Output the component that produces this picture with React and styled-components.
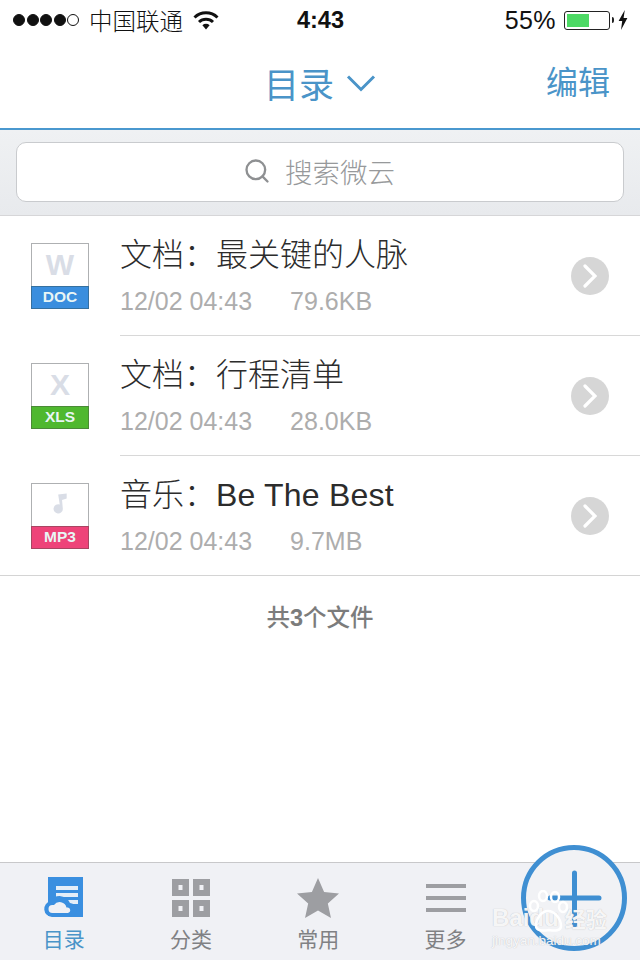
import React from 'react';
import styled, { createGlobalStyle } from 'styled-components';
import { Search } from 'lucide-react';

const sans = '"Liberation Sans", "Noto Sans CJK SC", sans-serif';
const cjk = '"Noto Sans CJK SC", "Liberation Sans", sans-serif';

const GlobalStyle = createGlobalStyle`
  html, body { margin: 0; padding: 0; background: #fff; }
  * { box-sizing: border-box; }
`;

const Screen = styled.div`
  position: relative;
  width: 640px;
  height: 960px;
  overflow: hidden;
  display: flex;
  flex-direction: column;
  background: #fff;
  font-family: ${sans};
`;

const StatusBar = styled.div`
  height: 40px;
  display: grid;
  grid-template-columns: 1fr auto 1fr;
  align-items: center;
  padding: 0 12px 0 13px;
  color: #111;
`;

const Carrier = styled.div`
  display: flex;
  align-items: center;
`;

const Signal = styled.span`
  width: 12px;
  height: 12px;
  margin-right: 1.5px;
  border-radius: 50%;
  border: 1px solid #111;
  background: ${(props) => (props.$on ? '#111' : 'transparent')};
`;

const CarrierName = styled.span`
  margin-left: 8.5px;
  margin-right: 10px;
  font-family: ${cjk};
  font-size: 23.5px;
  font-weight: 300;
  line-height: 30px;
`;

const Clock = styled.div`
  font-size: 23.5px;
  font-weight: 700;
  padding-top: 1px;
`;

const Power = styled.div`
  display: flex;
  align-items: center;
  justify-content: flex-end;
`;

const Percent = styled.span`
  margin-right: 8px;
  font-size: 25px;
  letter-spacing: 0.4px;
`;

const Battery = styled.div`
  width: 46px;
  height: 19px;
  padding: 2px;
  border: 1px solid #222;
  border-radius: 3px;
`;

const BatteryFill = styled.div`
  height: 100%;
  background: #4cd964;
`;

const BatteryTip = styled.span`
  width: 2px;
  height: 6px;
  margin: 0 4px 0 2px;
  border-radius: 0 2px 2px 0;
  background: #222;
`;

const NavBar = styled.div`
  height: 90px;
  display: grid;
  grid-template-columns: 1fr auto 1fr;
  align-items: center;
  border-bottom: 2px solid #4a98cf;
  padding-bottom: 2px;
  color: #4a94c8;
`;

const NavTitle = styled.div`
  grid-column: 2;
  display: flex;
  align-items: center;
  gap: 12px;
  font-family: ${cjk};
  font-size: 35px;
  line-height: 48px;
`;

const NavAction = styled.div`
  justify-self: end;
  margin: 0 30px 6px 0;
  font-family: ${cjk};
  font-size: 32px;
  line-height: 44px;
`;

const SearchArea = styled.div`
  height: 86px;
  padding: 12px 16px 13px;
  background: linear-gradient(#eff1f3, #e8eaed);
  border-bottom: 1px solid #d6d6d8;
`;

const SearchField = styled.div`
  height: 60px;
  display: flex;
  align-items: center;
  justify-content: center;
  gap: 14px;
  padding: 0 2px 3px 0;
  background: #fff;
  border: 1px solid #c9cbce;
  border-radius: 10px;
  color: #97999b;
  font-family: ${cjk};
  font-size: 27.5px;
  font-weight: 300;
`;

const FileList = styled.div`
  display: flex;
  flex-direction: column;
`;

const FileRow = styled.div`
  height: 120px;
  display: flex;
  padding-left: 31px;
  border-bottom: ${(props) => (props.$last ? '1px solid #d4d4d4' : 'none')};
`;

const FileIcon = styled.div`
  width: 58px;
  height: 66px;
  margin-top: 27px;
  display: flex;
  flex-direction: column;
  border: 1px solid #aeb0b2;
  background: #fff;
`;

const FileGlyph = styled.div`
  flex: 1;
  display: flex;
  align-items: center;
  justify-content: center;
  color: #d9dde6;
  font-size: 30px;
  font-weight: 700;
  line-height: 1;
`;

const FileBadge = styled.div`
  height: 23px;
  margin: 0 -1px -1px;
  text-align: center;
  color: #e8f5f5;
  font-size: 15.5px;
  font-weight: 700;
  line-height: 19px;
  background: ${(props) => props.$color};
  border: 1px solid ${(props) => props.$edge};
`;

const FileBody = styled.div`
  flex: 1;
  display: flex;
  margin-left: 31px;
  border-bottom: ${(props) => (props.$last ? 'none' : '1px solid #d8d8d8')};
`;

const FileText = styled.div`
  flex: 1;
  padding-top: 12px;
`;

const FileName = styled.div`
  font-family: ${sans};
  font-size: 32px;
  font-weight: 400;
  line-height: 48px;
  letter-spacing: 0.2px;
  color: #2c2c2c;
`;

const CjkPart = styled.span`
  font-family: ${cjk};
  font-weight: 300;
  letter-spacing: 0;
`;

const FileMeta = styled.div`
  display: flex;
  gap: 38px;
  margin-top: 7px;
  font-size: 25px;
  line-height: 30px;
  color: #adadad;
`;

const Disclosure = styled.div`
  width: 38px;
  height: 38px;
  margin: 41px 31px 0 0;
  border-radius: 50%;
  background: #d6d6d6;
  display: flex;
  align-items: center;
  justify-content: center;
`;

const Summary = styled.div`
  margin-top: 24px;
  text-align: center;
  font-family: ${cjk};
  font-size: 23.5px;
  line-height: 32px;
  font-weight: 500;
  color: #7c7c7c;
`;

const SummaryCount = styled.b`
  font-family: ${sans};
  font-weight: 700;
`;

const TabBar = styled.div`
  margin-top: auto;
  height: 98px;
  display: grid;
  grid-template-columns: repeat(5, 127.3px);
  padding-top: 12px;
  background: #f0f1f5;
  border-top: 1px solid #c8c8ca;
`;

const Tab = styled.div`
  display: flex;
  flex-direction: column;
  align-items: center;
  color: ${(props) => (props.$active ? '#4a94c8' : '#808184')};
`;

const TabIcon = styled.div`
  height: 46px;
  display: flex;
  align-items: center;
  justify-content: center;
`;

const TabLabel = styled.div`
  margin-top: 3px;
  font-family: ${cjk};
  font-size: 21px;
  font-weight: 400;
  line-height: 28px;
`;

const AddButton = styled.div`
  position: absolute;
  left: 521px;
  top: 845px;
  width: 106px;
  height: 106px;
  border-radius: 50%;
  border: 5px solid #3f8fd2;
  background: #f1f2f5;
`;

const Watermark = styled.div`
  position: absolute;
  left: 492px;
  top: 904px;
  width: 146px;
  color: rgba(255, 255, 255, 0.9);
  text-shadow: 0 0 1px rgba(165, 165, 170, 0.8);
`;

const WatermarkPaw = styled.div`
  position: absolute;
  left: 36px;
  top: -14px;
`;

const WatermarkMain = styled.div`
  display: flex;
  align-items: center;
  font-size: 24px;
  font-weight: 700;
  line-height: 28px;
`;

const WatermarkCjk = styled.span`
  margin-left: 6px;
  font-family: ${cjk};
  font-size: 21px;
`;

const WatermarkUrl = styled.div`
  margin-top: 1px;
  font-size: 13.5px;
  line-height: 16px;
`;

const WifiIcon = () => (
  <svg width="26" height="20" viewBox="0 0 26 20">
    <path d="M1.5 7.5a16.5 16.5 0 0 1 23 0" fill="none" stroke="#111" strokeWidth="3" />
    <path d="M6 12a10.2 10.2 0 0 1 14 0" fill="none" stroke="#111" strokeWidth="3" />
    <path d="M9.4 15.2a5.2 5.2 0 0 1 7.2 0L13 19.4z" fill="#111" />
  </svg>
);

const BoltIcon = () => (
  <svg width="10" height="20" viewBox="0 0 10 20">
    <path d="M6.8 0 0.6 11h3.6L3 20l6.400-12H5.600z" fill="#111" />
  </svg>
);

const Chevron = () => (
  <svg width="30" height="18" viewBox="0 0 30 18">
    <path d="M2 2.500 15 15.500 28 2.500" fill="none" stroke="#4a94c8" strokeWidth="3" />
  </svg>
);

const RowArrow = () => (
  <svg width="14" height="24" viewBox="0 0 14 24">
    <path d="M2 2 12 12 2 22" fill="none" stroke="#fff" strokeWidth="3.2" strokeLinecap="round" />
  </svg>
);

const NoteIcon = () => (
  <svg width="17" height="24" viewBox="0 0 22 30">
    <path d="M8 1.500 19 0v6.500L13 8.500 14 20a6 6 0 1 1-4-5.600z" fill="#d9dde6" />
  </svg>
);

const CatalogIcon = () => (
  <svg width="42" height="42" viewBox="0 0 42 42">
    <path d="M5 0h35v40H14v-1H5z" fill="#3a8fe0" />
    <path d="M13 9h22v4H13zM13 16h22v4H13zM20 23h15v4H20z" fill="#e4eef8" />
    <path d="M9 40a8 8 0 0 1-1.500-15.800A11 11 0 0 1 27 26a7 7 0 0 1-1 14z" fill="#3a8fe0" />
    <path d="M9.500 36a4 4 0 0 1 0-8h1.500a7 7 0 0 1 12.500 2.500H25a2.800 2.800 0 0 1 0 5.500z" fill="#f0f1f5" />
  </svg>
);

const GridIcon = () => (
  <svg width="38" height="38" viewBox="0 0 38 38">
    <path
      fillRule="evenodd"
      d="M0 0h17v17H0zM6.500 6v5h4V6zM21 0h17v17H21zM27.500 6v5h4V6zM0 21h17v17H0zM6.500 27v5h4v-5zM21 21h17v17H21zM27.500 27v5h4v-5z"
      fill="#9d9ea2"
    />
  </svg>
);

const StarIcon = () => (
  <svg width="42" height="42" viewBox="0 0 44 42">
    <path d="M22 0l6.400 14.600L44 16.200 32.300 26.700 35.600 42 22 34.100 8.400 42l3.300-15.300L0 16.200l15.600-1.600z" fill="#9d9ea2" />
  </svg>
);

const MenuIcon = () => (
  <svg width="40" height="28" viewBox="0 0 40 28">
    <path d="M0 0h40v4H0zM0 12h40v4H0zM0 24h40v4H0z" fill="#9d9ea2" />
  </svg>
);

const PlusIcon = () => (
  <svg width="96" height="96" viewBox="0 0 96 96">
    <path d="M24 48h49M48.500 23v52" fill="none" stroke="#3f8fd2" strokeWidth="5" strokeLinecap="round" />
  </svg>
);

const PawMark = () => (
  <svg width="40" height="42" viewBox="0 0 40 42" fill="none" stroke="#fff" strokeWidth="2.500">
    <ellipse cx="6" cy="16" rx="4" ry="5" />
    <ellipse cx="15" cy="6" rx="4" ry="5" />
    <ellipse cx="27" cy="7" rx="4" ry="5" />
    <ellipse cx="35" cy="17" rx="4" ry="5" />
    <path d="M8 36c0-8 6-15 12-15s13 7 13 15c0 5-6 5-12 4-6 1-13 1-13-4z" />
  </svg>
);

const files = [
  { type: '文档：', name: '最关键的人脉', cjkName: true, size: '79.6KB', glyph: 'W', badge: 'DOC', color: '#3a8ede', edge: '#35709f' },
  { type: '文档：', name: '行程清单', cjkName: true, size: '28.0KB', glyph: 'X', badge: 'XLS', color: '#4fb82f', edge: '#4a8a37' },
  { type: '音乐：', name: 'Be The Best', cjkName: false, size: '9.7MB', glyph: null, badge: 'MP3', color: '#ee4379', edge: '#a84562' },
];

const tabs = [
  { label: '目录', icon: <CatalogIcon />, active: true },
  { label: '分类', icon: <GridIcon /> },
  { label: '常用', icon: <StarIcon /> },
  { label: '更多', icon: <MenuIcon /> },
];

const App = () => (
  <Screen>
    <GlobalStyle />
    <StatusBar>
      <Carrier>
        {[1, 2, 3, 4, 5].map((n) => <Signal key={n} $on={n < 5} />)}
        <CarrierName>中国联通</CarrierName>
        <WifiIcon />
      </Carrier>
      <Clock>4:43</Clock>
      <Power>
        <Percent>55%</Percent>
        <Battery><BatteryFill style={{ width: '55%' }} /></Battery>
        <BatteryTip />
        <BoltIcon />
      </Power>
    </StatusBar>
    <NavBar>
      <NavTitle>目录<Chevron /></NavTitle>
      <NavAction>编辑</NavAction>
    </NavBar>
    <SearchArea>
      <SearchField>
        <Search size={28} strokeWidth={2} color="#8e9092" />
        搜索微云
      </SearchField>
    </SearchArea>
    <FileList>
      {files.map((file, i) => {
        const last = i === files.length - 1;
        return (
          <FileRow key={file.badge} $last={last}>
            <FileIcon>
              <FileGlyph>{file.glyph || <NoteIcon />}</FileGlyph>
              <FileBadge $color={file.color} $edge={file.edge}>{file.badge}</FileBadge>
            </FileIcon>
            <FileBody $last={last}>
              <FileText>
                <FileName>
                  <CjkPart>{file.type}</CjkPart>
                  {file.cjkName ? <CjkPart>{file.name}</CjkPart> : file.name}
                </FileName>
                <FileMeta>
                  <span>12/02 04:43</span>
                  <span>{file.size}</span>
                </FileMeta>
              </FileText>
              <Disclosure><RowArrow /></Disclosure>
            </FileBody>
          </FileRow>
        );
      })}
    </FileList>
    <Summary>共<SummaryCount>3</SummaryCount>个文件</Summary>
    <TabBar>
      {tabs.map((tab) => (
        <Tab key={tab.label} $active={tab.active}>
          <TabIcon>{tab.icon}</TabIcon>
          <TabLabel>{tab.label}</TabLabel>
        </Tab>
      ))}
    </TabBar>
    <AddButton><PlusIcon /></AddButton>
    <Watermark>
      <WatermarkPaw><PawMark /></WatermarkPaw>
      <WatermarkMain>Baidu<WatermarkCjk>经验</WatermarkCjk></WatermarkMain>
      <WatermarkUrl>jingyan.baidu.com</WatermarkUrl>
    </Watermark>
  </Screen>
);

export default App;
